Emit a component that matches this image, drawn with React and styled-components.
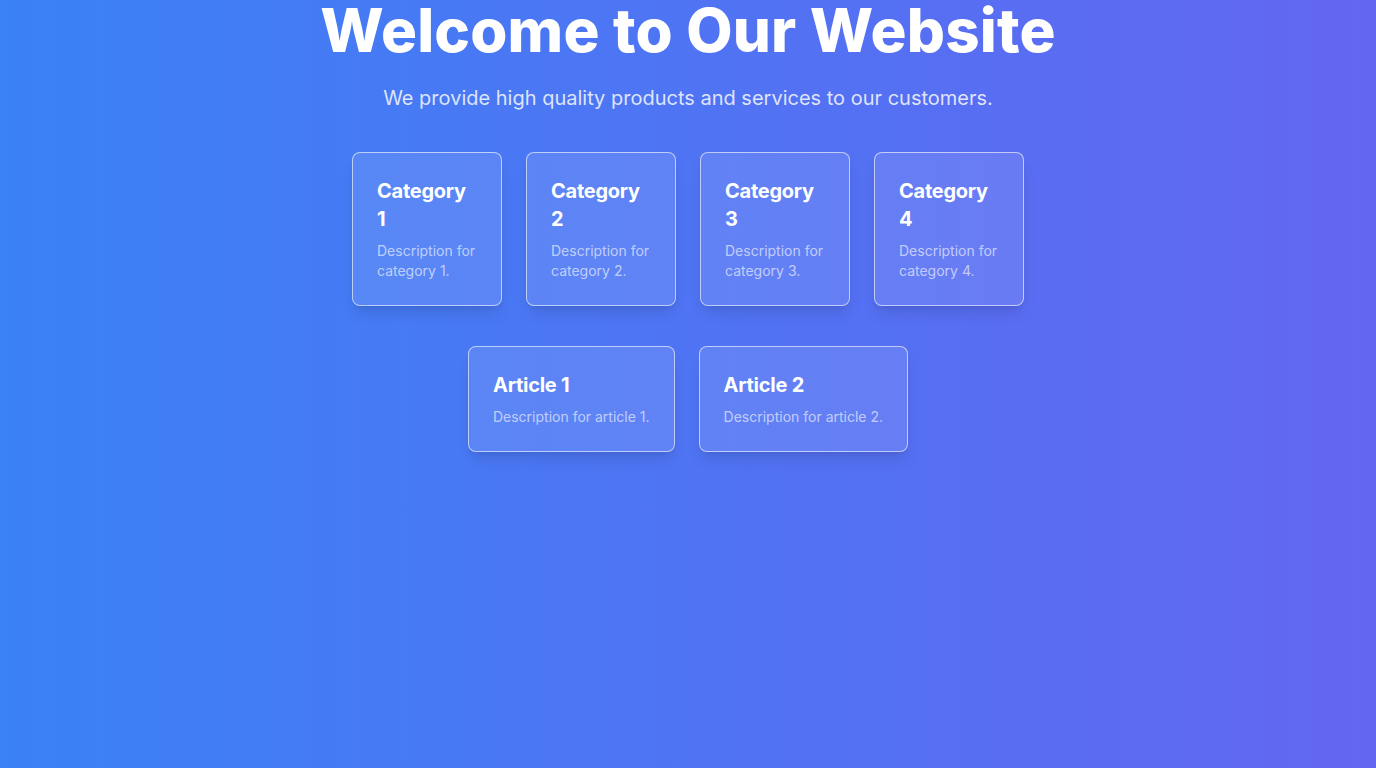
import React from "react";
import styled, { createGlobalStyle } from "styled-components";

const GlobalStyle = createGlobalStyle`
  * { box-sizing: border-box; }
  html, body { margin: 0; padding: 0; }
  body {
    font-family: Inter, "Noto Sans", sans-serif;
    background: linear-gradient(to right, #3b82f6, #6366f1);
    min-height: 100vh;
  }
`;

const Page = styled.main`
  min-height: 100vh;
  display: flex;
  flex-direction: column;
  align-items: center;
  color: #fff;
  text-align: center;
`;

const Title = styled.h1`
  margin: 0 0 24px;
  font-size: 60px;
  line-height: 1;
  font-weight: 800;
  letter-spacing: 0.2px;
`;

const Lead = styled.p`
  margin: 0 0 40px;
  font-size: 20px;
  line-height: 28px;
  color: rgba(255, 255, 255, 0.82);
`;

const Row = styled.section`
  display: flex;
  justify-content: center;
  gap: 24px;
  margin-bottom: ${(p) => p.$space || 0}px;
`;

const Card = styled.div`
  width: ${(p) => (p.$width ? `${p.$width}px` : "auto")};
  padding: 24px;
  text-align: left;
  background: rgba(255, 255, 255, 0.1);
  border: 1px solid rgba(255, 255, 255, 0.6);
  border-radius: 8px;
  box-shadow: 0 10px 15px -3px rgba(0, 0, 0, 0.1), 0 4px 6px -4px rgba(0, 0, 0, 0.1);
`;

const CardTitle = styled.h3`
  margin: 0 0 8px;
  font-size: 20px;
  line-height: 28px;
  font-weight: 700;
  letter-spacing: -0.25px;
`;

const CardText = styled.p`
  margin: 0;
  font-size: 14px;
  line-height: 20px;
  color: rgba(255, 255, 255, 0.62);
`;

const categories = [1, 2, 3, 4];
const articles = [1, 2];

export default function App() {
  return (
    <>
      <GlobalStyle />
      <Page>
        <Title>Welcome to Our Website</Title>
        <Lead>We provide high quality products and services to our customers.</Lead>
        <Row $space={40}>
          {categories.map((n) => (
            <Card key={n} $width={150}>
              <CardTitle>Category {n}</CardTitle>
              <CardText>Description for category {n}.</CardText>
            </Card>
          ))}
        </Row>
        <Row>
          {articles.map((n) => (
            <Card key={n}>
              <CardTitle>Article {n}</CardTitle>
              <CardText>Description for article {n}.</CardText>
            </Card>
          ))}
        </Row>
      </Page>
    </>
  );
}
